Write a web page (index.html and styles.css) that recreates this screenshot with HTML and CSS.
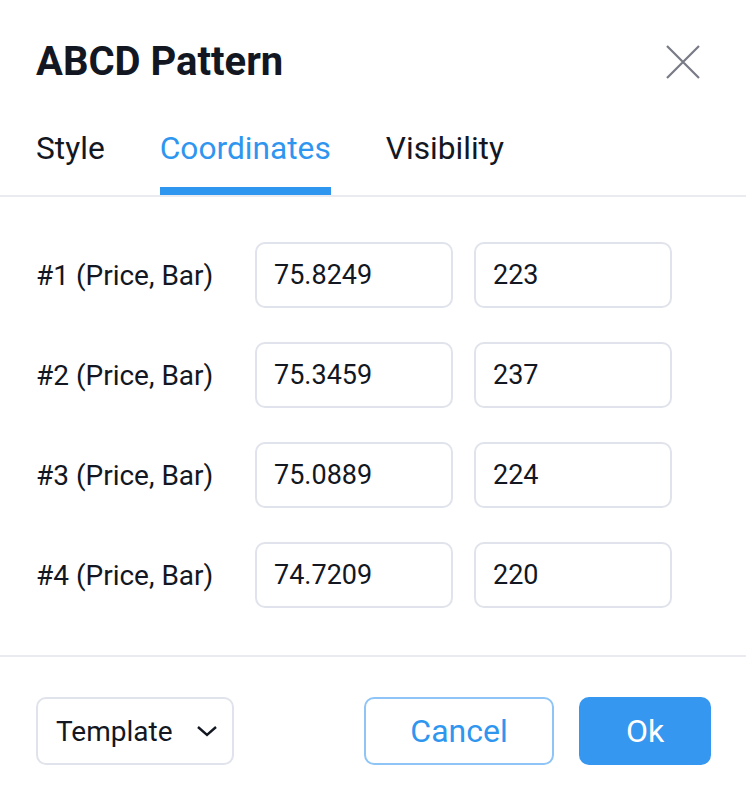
FILE: index.html
```html
<!DOCTYPE html>
<html>
<head>
<meta charset="utf-8">
<link rel="stylesheet" href="styles.css">
</head>
<body>
<div class="dialog">
  <div class="header">
    <div class="title">ABCD Pattern</div>
    <div class="close">
      <svg width="34" height="34" viewBox="0 0 34 34"><path d="M1 1L33 33M33 1L1 33" stroke="#787b86" stroke-width="2.2" fill="none"/></svg>
    </div>
  </div>
  <div class="tabs">
    <div class="tab">Style</div>
    <div class="tab active">Coordinates</div>
    <div class="tab">Visibility</div>
  </div>
  <div class="content">
    <div class="label">#1 (Price, Bar)</div>
    <div class="input">75.8249</div>
    <div class="input">223</div>
    <div class="label">#2 (Price, Bar)</div>
    <div class="input">75.3459</div>
    <div class="input">237</div>
    <div class="label">#3 (Price, Bar)</div>
    <div class="input">75.0889</div>
    <div class="input">224</div>
    <div class="label">#4 (Price, Bar)</div>
    <div class="input">74.7209</div>
    <div class="input">220</div>
  </div>
  <div class="footer">
    <div class="template">
      <span>Template</span>
      <svg width="22" height="14" viewBox="0 0 22 14"><path d="M2 3L11 11L20 3" stroke="#131722" stroke-width="2.4" fill="none"/></svg>
    </div>
    <div class="actions">
      <div class="btn cancel">Cancel</div>
      <div class="btn ok">Ok</div>
    </div>
  </div>
</div>
</body>
</html>
```
FILE: styles.css
```css
html, body {
  margin: 0;
  padding: 0;
  background: #ffffff;
}
.dialog {
  width: 746px;
  height: 798px;
  font-family: Roboto, "Liberation Sans", sans-serif;
  color: #131722;
  box-sizing: border-box;
}
.header {
  padding: 38px 46px 0 36px;
  display: flex;
  justify-content: space-between;
  align-items: center;
  height: 48px;
}
.title {
  font-size: 40px;
  line-height: 48px;
  font-weight: 700;
}
.close {
  width: 34px;
  height: 34px;
  display: flex;
}
.tabs {
  margin-top: 43px;
  padding: 0 36px;
  display: flex;
  gap: 55px;
  border-bottom: 2px solid #e9ebf0;
}
.tab {
  font-size: 31.7px;
  line-height: 40px;
  padding-bottom: 18px;
  border-bottom: 8px solid transparent;
}
.tab.active {
  color: #2f96f0;
  border-bottom-color: #2f96f0;
}
.content {
  padding: 45px 36px 47px;
  display: grid;
  grid-template-columns: 198px 198px 198px;
  column-gap: 21px;
  row-gap: 34px;
  border-bottom: 2px solid #e9ebf0;
}
.label {
  font-size: 28px;
  display: flex;
  align-items: center;
  height: 66px;
}
.input {
  height: 66px;
  box-sizing: border-box;
  border: 2px solid #e0e3eb;
  border-radius: 10px;
  padding-left: 17px;
  font-size: 27px;
  display: flex;
  align-items: center;
}
.footer {
  padding: 40px 35px 0 36px;
  display: flex;
  justify-content: space-between;
}
.template {
  width: 198px;
  height: 68px;
  box-sizing: border-box;
  border: 2px solid #e0e3eb;
  border-radius: 10px;
  padding: 0 14px 0 18px;
  font-size: 28px;
  display: flex;
  align-items: center;
  justify-content: space-between;
}
.actions {
  display: flex;
  gap: 25px;
}
.btn {
  height: 68px;
  box-sizing: border-box;
  border-radius: 10px;
  font-size: 32px;
  display: flex;
  align-items: center;
  justify-content: center;
}
.cancel {
  width: 190px;
  border: 2px solid #8fc4f7;
  color: #2f96f0;
}
.ok {
  width: 132px;
  background: #3597ef;
  color: #ffffff;
}
```
